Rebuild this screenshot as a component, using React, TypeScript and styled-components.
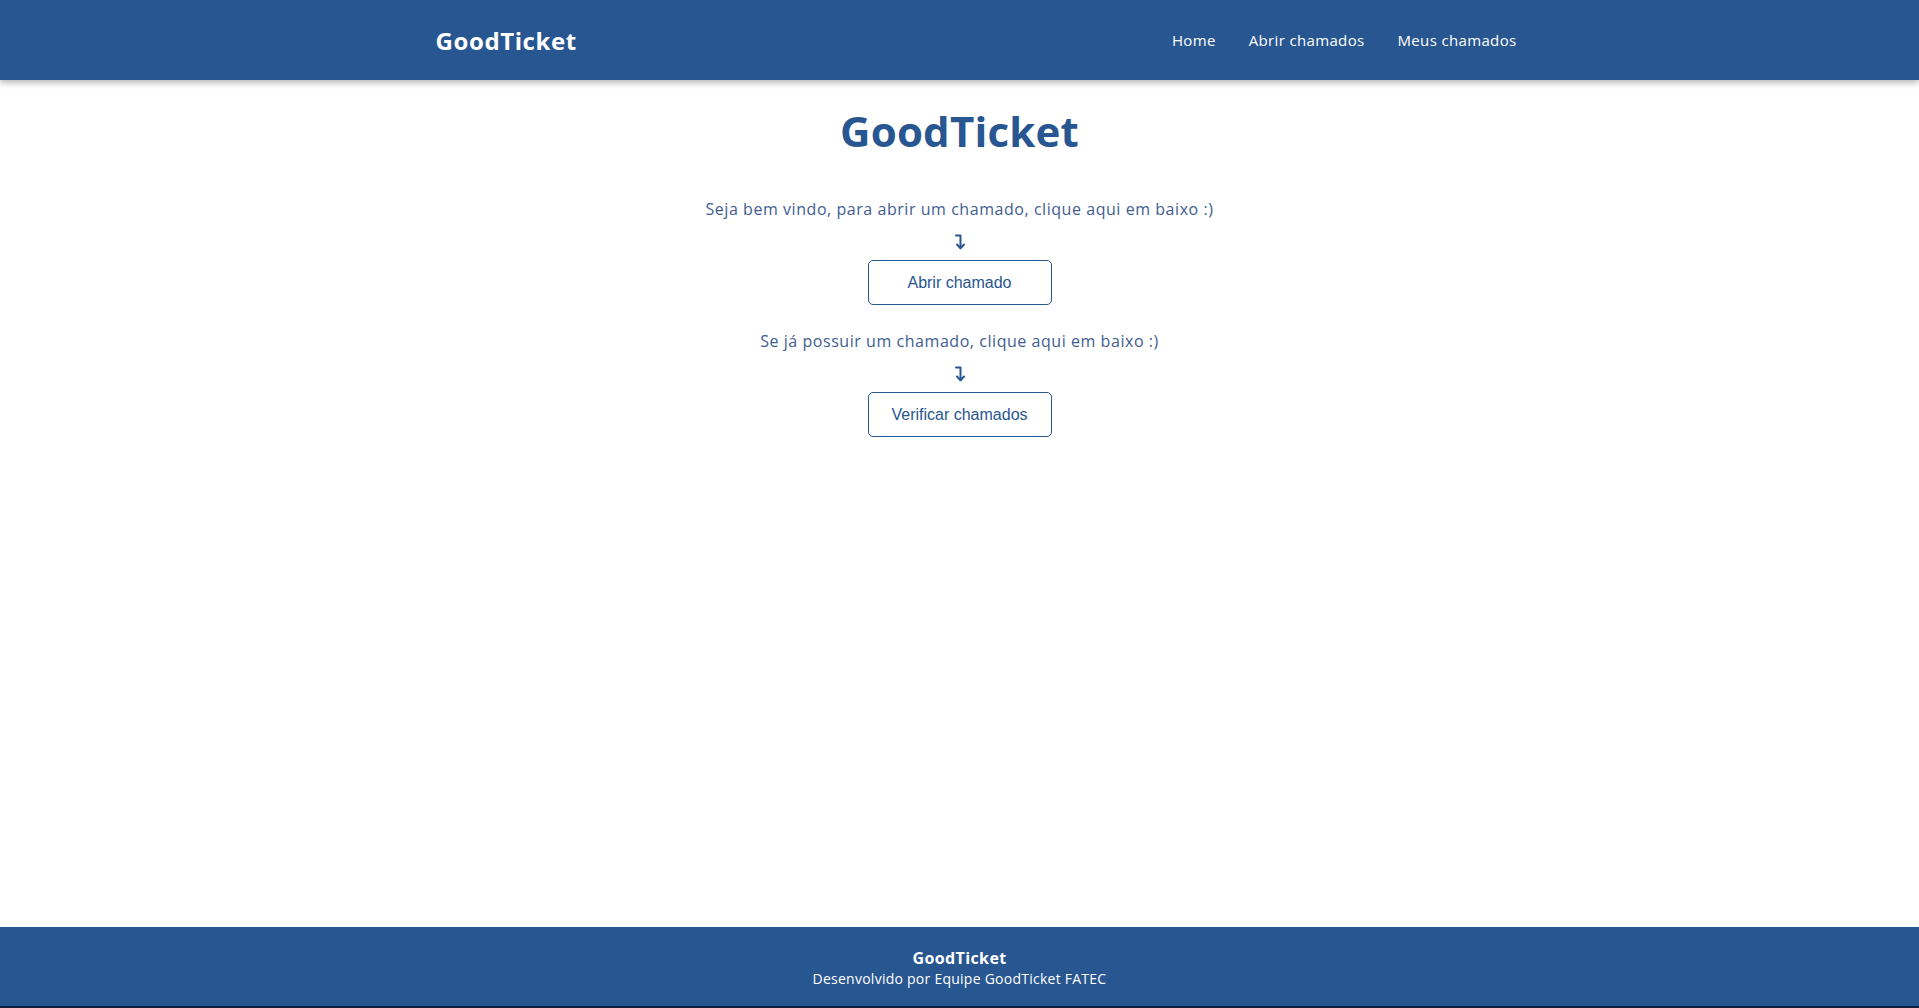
import React from "react";
import styled, { createGlobalStyle } from "styled-components";

const BLUE = "#285690";

const Global = createGlobalStyle`
  html, body { margin: 0; padding: 0; background: #ffffff; }
  body { font-family: "Open Sans", "Liberation Sans", sans-serif; }
  * { box-sizing: border-box; }
`;

const Page = styled.div`
  min-height: 100vh;
  display: flex;
  flex-direction: column;
`;

const Header = styled.header`
  height: 80px;
  background: ${BLUE};
  box-shadow: 0 3px 6px rgba(0, 0, 0, 0.28);
  display: flex;
  justify-content: center;
  position: relative;
  z-index: 1;
`;

const HeaderInner = styled.div`
  width: 1140px;
  padding: 0 14px 0 46px;
  display: flex;
  align-items: center;
  justify-content: space-between;
`;

const Brand = styled.div`
  color: #ffffff;
  font-family: "Open Sans", sans-serif;
  font-weight: 700;
  font-size: 24px;
  letter-spacing: 0.6px;
  line-height: 32px;
  margin-top: 1px;
`;

const Nav = styled.nav`
  display: flex;
  gap: 33px;
  margin-right: -1px;
`;

const NavLink = styled.a`
  color: #ffffff;
  font-family: "Open Sans", sans-serif;
  font-size: 15px;
  line-height: 20px;
  text-decoration: none;
  letter-spacing: 0.35px;
  margin-bottom: 1px;
`;

const Main = styled.main`
  flex: 1;
  display: flex;
  flex-direction: column;
  align-items: center;
  padding-top: 26px;
`;

const Title = styled.h1`
  margin: 0 0 42px;
  color: ${BLUE};
  font-family: "Open Sans", sans-serif;
  font-weight: 700;
  font-size: 42px;
  line-height: 50px;
  letter-spacing: 0.2px;
`;

const Lead = styled.p<{ $spacing: number }>`
  margin: 0;
  color: #3f5d91;
  font-family: "Open Sans", sans-serif;
  font-size: 16px;
  line-height: 22px;
  letter-spacing: ${(p) => p.$spacing}px;
`;

const ArrowBox = styled.div`
  height: 40px;
  display: flex;
  align-items: center;
  justify-content: center;
  padding-top: 4px;
  color: ${BLUE};
`;

const ActionButton = styled.button`
  width: 184px;
  height: 45px;
  background: #ffffff;
  border: 1.5px solid ${BLUE};
  border-radius: 5px;
  color: ${BLUE};
  font-family: "Liberation Sans", Arial, sans-serif;
  font-size: 16px;
  cursor: pointer;
  margin-bottom: 25px;
  padding: 0;
`;

const Footer = styled.footer`
  height: 81px;
  background: ${BLUE};
  border-bottom: 2px solid #0d2240;
  display: flex;
  flex-direction: column;
  align-items: center;
  padding-top: 21px;
  color: #ffffff;
  font-family: "Open Sans", sans-serif;
`;

const FooterTitle = styled.div`
  font-weight: 700;
  font-size: 16px;
  line-height: 20px;
  letter-spacing: 0.4px;
`;

const FooterText = styled.div`
  font-size: 14px;
  line-height: 20px;
  letter-spacing: 0.25px;
  margin-top: 1px;
`;

const HookArrow = () => (
  <svg width="12" height="16" viewBox="0 0 12 16" fill="none" stroke="currentColor" strokeWidth="2" strokeLinecap="round" strokeLinejoin="round">
    <path d="M2 1.5 H6.5 V14" />
    <path d="M3 10.5 L6.5 14.2 L10 10.5" />
  </svg>
);

export default function App() {
  return (
    <Page>
      <Global />
      <Header>
        <HeaderInner>
          <Brand>GoodTicket</Brand>
          <Nav>
            <NavLink href="#">Home</NavLink>
            <NavLink href="#">Abrir chamados</NavLink>
            <NavLink href="#">Meus chamados</NavLink>
          </Nav>
        </HeaderInner>
      </Header>
      <Main>
        <Title>GoodTicket</Title>
        <Lead $spacing={0.55}>Seja bem vindo, para abrir um chamado, clique aqui em baixo :)</Lead>
        <ArrowBox>
          <HookArrow />
        </ArrowBox>
        <ActionButton>Abrir chamado</ActionButton>
        <Lead $spacing={0.55}>Se já possuir um chamado, clique aqui em baixo :)</Lead>
        <ArrowBox>
          <HookArrow />
        </ArrowBox>
        <ActionButton>Verificar chamados</ActionButton>
      </Main>
      <Footer>
        <FooterTitle>GoodTicket</FooterTitle>
        <FooterText>Desenvolvido por Equipe GoodTicket FATEC</FooterText>
      </Footer>
    </Page>
  );
}
